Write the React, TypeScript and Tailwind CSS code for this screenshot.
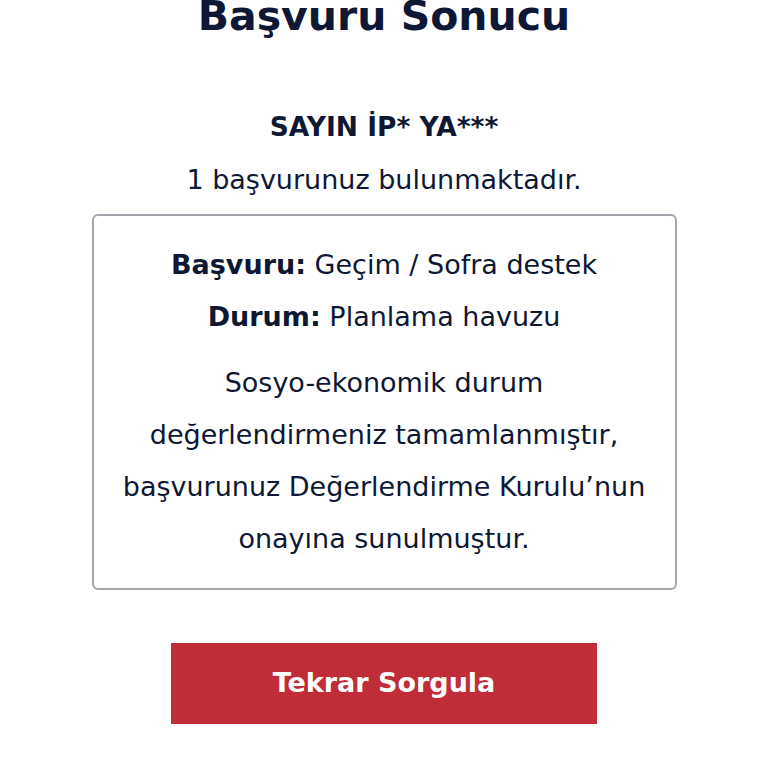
export default function App() {
  return (
    <div className="min-h-[768px] w-full overflow-hidden bg-white font-['DejaVu_Sans',sans-serif] text-[#0e1733]">
      <div className="-mt-[12px] flex flex-col items-center">
        {/* Title */}
        <h1 className="text-[41px] font-bold leading-[56px]">
          Başvuru Sonucu
        </h1>

        {/* Greeting */}
        <p className="mt-[65px] text-[26.5px] font-bold leading-[36px]">
          SAYIN İP* YA***
        </p>
        <p className="mt-[17px] text-[27px] leading-[36px]">
          1 başvurunuz bulunmaktadır.
        </p>

        {/* Result card */}
        <div className="mt-[16px] flex w-[585px] flex-col items-center rounded-[6px] border-2 border-[#a4a6ae] px-2 py-[23px] text-center text-[27px] leading-[52px]">
          <p>
            <span className="font-bold">Başvuru:</span> Geçim / Sofra destek
          </p>
          <p>
            <span className="font-bold">Durum:</span> Planlama havuzu
          </p>
          <p className="mt-[14px]">
            Sosyo-ekonomik durum
            <br />
            değerlendirmeniz tamamlanmıştır,
            <br />
            başvurunuz Değerlendirme Kurulu’nun
            <br />
            onayına sunulmuştur.
          </p>
        </div>

        {/* Action */}
        <button className="mt-[53px] flex h-[81px] w-[426px] items-center justify-center bg-[#c02d38] text-[27px] font-bold text-white">
          Tekrar Sorgula
        </button>
      </div>
    </div>
  )
}
